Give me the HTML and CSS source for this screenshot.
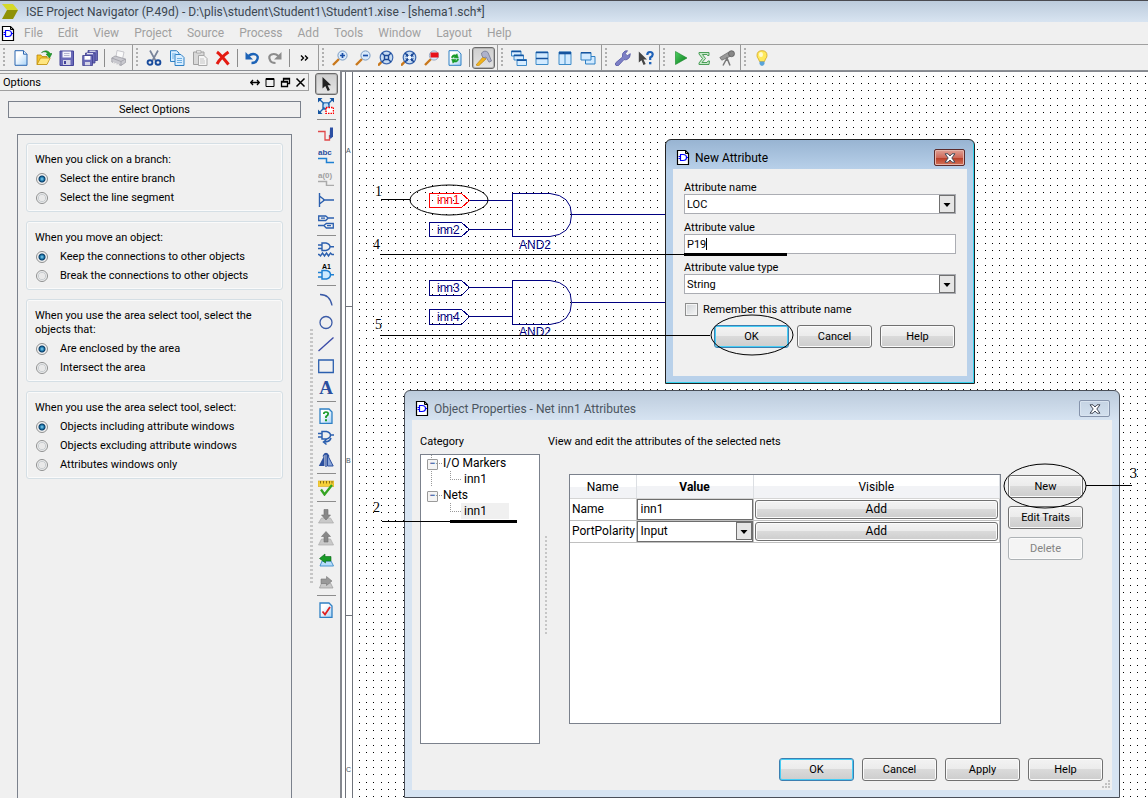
FILE: index.html
```html
<!DOCTYPE html>
<html lang="en">
<head>
<meta charset="utf-8">
<title>ISE Project Navigator</title>
<link rel="stylesheet" href="styles.css">
</head>
<body>
<svg class="defs" aria-hidden="true">
  <defs>
    <symbol id="doc-gate" viewBox="0 0 14 17">
      <path d="M1.500 1.500h8l3 3v11h-11z" fill="#fff" stroke="#000" stroke-width="1.200"/>
      <path d="M9.500 1.500v3h3" fill="none" stroke="#000"/>
      <path d="M4.500 5.500h2.500q3.500 0 3.500 3t-3.500 3h-2.500zM2.500 7.500h2M2.500 9.500h2M10.500 8.500h1.500" fill="none" stroke="#00f" stroke-width="1.200"/>
    </symbol>
    <symbol id="cross" viewBox="0 0 12 10">
      <path d="M1 .8h3l2 2.200 2-2.200h3L7.800 5 11 9.200H8L6 7 4 9.200H1L4.200 5z" fill="#fff" stroke="#444a58" stroke-width="1"/>
    </symbol>
    <linearGradient id="paper" x1="0" y1="0" x2="1" y2="1"><stop offset=".3" stop-color="#fff"/><stop offset="1" stop-color="#a9d3f7"/></linearGradient>
    <linearGradient id="go" x1="0" y1="0" x2="1" y2="1"><stop offset="0" stop-color="#4fd062"/><stop offset="1" stop-color="#087a1c"/></linearGradient>
    <pattern id="dots" x="359" y="156" width="80" height="80" patternUnits="userSpaceOnUse">
      <path d="M0 .5h80M0 7.500h80M0 14.500h80M0 22.500h80M0 29.500h80M0 36.500h80M0 44.500h80M0 51.500h80M0 58.500h80M0 66.500h80M0 73.500h80" stroke="#000" stroke-dasharray="1 6 1 6 1 7 1 6 1 6 1 7 1 6 1 6 1 7 1 6 1 6" shape-rendering="crispEdges"/>
    </pattern>
  </defs>
</svg>

<div class="app">
  <header class="titlebar">
    <svg class="app-logo" viewBox="0 0 18 17"><path d="M1 1h11l5 6H6z" fill="#d5d92a"/><path d="M6 7h11l-5 9H1z" fill="#8f9208"/></svg>
    <h1>ISE Project Navigator (P.49d) - D:\plis\student\Student1\Student1.xise - [shema1.sch*]</h1>
  </header>

  <nav class="menubar">
    <svg class="doc-icon"><use href="#doc-gate"/></svg>
    <button>File</button><button>Edit</button><button>View</button><button>Project</button><button>Source</button><button>Process</button><button>Add</button><button>Tools</button><button>Window</button><button>Layout</button><button>Help</button>
  </nav>

  <div class="toolbar">
    <div class="tools">
      <button aria-label="New"><svg viewBox="0 0 16 16"><path d="M2 .7h8.500L14 4.200v11.100H2z" fill="url(#paper)" stroke="#2b66b0"/><path d="M10.500.7v3.500H14" fill="#e7f3ff" stroke="#2b66b0"/></svg></button>
      <button aria-label="Open"><svg viewBox="0 0 16 16"><path d="M1 14.500V5h4l1 1.500h5V14z" fill="#f3c52e" stroke="#b9850c" stroke-width=".8"/><path d="M1 14.500L4.500 8h9.700L11 14.500z" fill="#ffe680" stroke="#c2920f" stroke-width=".8"/><path d="M5.500 2.500Q10 .5 12 4h-2l3.500 4L16 3.500h-1.700Q11-1.500 5.500 2.500z" fill="#23a32c" stroke="#0e6e18" stroke-width=".5"/></svg></button>
      <button aria-label="Save"><svg viewBox="0 0 16 16"><path d="M1 1h13.500v14.500H1z" fill="#6a6ab8" stroke="#44449a"/><path d="M3.500 1.500h8.500v6H3.500z" fill="#f3f3fb"/><path d="M5 3.500h5.500M5 5.500h5.500" stroke="#a3a3c6" stroke-width=".8"/><path d="M4 10h7.500v5H4z" fill="#d4d4e6"/><path d="M5 11h2v3H5z" fill="#44449a"/></svg></button>
      <button aria-label="Save all"><svg viewBox="0 0 16 16"><g fill="#6a6ab8" stroke="#3f3f8e" stroke-width=".8"><path d="M6 .5h9.500v10H6z"/><path d="M3.500 3H13v10H3.500z"/><path d="M.7 5.500h9.800v10H.7z"/></g><path d="M2.500 6h6v3.700h-6z" fill="#fff"/><path d="M3 12h5v3.200H3z" fill="#d4d4e6"/><path d="M5 3.700h6M7.500 1.200h6" stroke="#fff"/></svg></button>
      <i class="sep"></i>
      <button aria-label="Print"><svg viewBox="0 0 16 16"><path d="M5 7L6 .5l7 1.500L11.500 9z" fill="#fafafa" stroke="#b5b5bb" stroke-width=".7"/><path d="M.8 8L4 6l10.500 3v3.500L10 15.500.8 12z" fill="#c9c9cf" stroke="#97979f" stroke-width=".7"/><path d="M.8 8l9.200 3.500 4.500-2.500M10 11.500v4" fill="none" stroke="#97979f" stroke-width=".7"/><path d="M2 12.500l6 2.300" stroke="#eee"/></svg></button>
    </div>
    <div class="tools">
      <button aria-label="Cut"><svg viewBox="0 0 16 16"><path d="M4 .5l5.500 10M12 .5l-5.500 10" stroke="#78839a" stroke-width="1.700"/><g fill="none" stroke="#174a9c" stroke-width="1.900"><ellipse cx="4" cy="12.500" rx="2.400" ry="2.300"/><ellipse cx="12" cy="12.500" rx="2.400" ry="2.300"/></g></svg></button>
      <button aria-label="Copy"><svg viewBox="0 0 16 16"><g fill="#d8edff" stroke="#2f80c4"><path d="M1.500.7h6L10 3v8.500H1.500z"/><path d="M6 4.500h6l3 3v8H6z"/></g><path d="M3 4h4M3 6h3M3 8h2M8 8.500h5M8 10.500h5M8 12.500h5" stroke="#62a8df" stroke-width=".9"/></svg></button>
      <button aria-label="Paste"><svg viewBox="0 0 16 16"><path d="M1.500 2H12v12.500H1.500z" fill="#d8d8d8" stroke="#a0a0a0"/><path d="M4.500.7H9V3H4.500z" fill="#eee" stroke="#a0a0a0" stroke-width=".8"/><path d="M6.500 5.500h5.500l3 3v7H6.500z" fill="#f5f5f5" stroke="#a8a8a8"/><path d="M8 9h4M8 11h5M8 13h5" stroke="#b9b9b9" stroke-width=".8"/></svg></button>
      <button aria-label="Delete"><svg viewBox="0 0 16 16"><path d="M2 2Q6 5 13.500 14.500M13.500 2Q6 7 2 14" fill="none" stroke="#e41b12" stroke-width="3"/></svg></button>
      <i class="sep"></i>
      <button aria-label="Undo"><svg viewBox="0 0 16 16"><path d="M4.500 6Q8 3 11.500 4.500T13 10Q12 13 7.500 13" fill="none" stroke="#1d63b7" stroke-width="2.400"/><path d="M1.500 2v7.500h7.500z" fill="#1d63b7"/></svg></button>
      <button aria-label="Redo"><svg viewBox="0 0 16 16"><path d="M11.500 6Q8 3 4.500 4.500T3 10Q4 13 8.500 13" fill="none" stroke="#8c8c8c" stroke-width="2.200"/><path d="M14.500 2v7.500H7z" fill="#8c8c8c"/></svg></button>
      <i class="sep"></i>
      <button class="more" aria-label="More"><svg viewBox="0 0 16 16"><path d="M5 5.500l2.500 2.500L5 10.500M9 5.500l2.500 2.500L9 10.500" fill="none" stroke="#000" stroke-width="1.400"/></svg></button>
    </div>
    <div class="tools">
      <button aria-label="Zoom in"><svg viewBox="0 0 16 16"><path d="M1 15l6-6" stroke="#c9781c" stroke-width="2.400"/><circle cx="10.500" cy="5.500" r="4.600" fill="#d9e9fa" stroke="#7a9cc4"/><path d="M10.500 3v5M8 5.500h5" stroke="#1c50a8" stroke-width="1.700"/></svg></button>
      <button aria-label="Zoom out"><svg viewBox="0 0 16 16"><path d="M1 15l6-6" stroke="#c9781c" stroke-width="2.400"/><circle cx="10.500" cy="5.500" r="4.600" fill="#d9e9fa" stroke="#7a9cc4"/><path d="M8 5.500h5" stroke="#1c50a8" stroke-width="1.700"/></svg></button>
      <button aria-label="Zoom full"><svg viewBox="0 0 16 16"><path d="M0 15.500l4-4" stroke="#c9781c" stroke-width="2.400"/><circle cx="8.500" cy="7.500" r="6.300" fill="#c8dcf2" stroke="#3c68b0" stroke-width="1.200"/><path d="M4 3l3 3M13 3l-3 3M4 12l3-3M13 12l-3-3M6.500 5.500h4v4h-4z" fill="none" stroke="#1a4796" stroke-width="1.400"/></svg></button>
      <button aria-label="Zoom fit"><svg viewBox="0 0 16 16"><path d="M0 15.500l4-4" stroke="#c9781c" stroke-width="2.400"/><circle cx="8.500" cy="7.500" r="6.300" fill="#c8dcf2" stroke="#3c68b0" stroke-width="1.200"/><path d="M4 3l9 9M13 3l-9 9" stroke="#1a4796" stroke-width="1.600"/><path d="M4 6.500h3v-3zM13 6.500h-3v-3zM4 8.500h3v3zM13 8.500h-3v3z" fill="#1a4796"/><path d="M7 6h3v3H7z" fill="#f5faff"/></svg></button>
      <button aria-label="Zoom to box"><svg viewBox="0 0 16 16"><path d="M1 15l6-6" stroke="#c9781c" stroke-width="2.400"/><circle cx="10" cy="5.500" r="4.600" fill="#d9e9fa" stroke="#9aa9c4"/><path d="M6.500 2.500h8v5h-8z" fill="#e8101a"/></svg></button>
      <button aria-label="Refresh"><svg viewBox="0 0 16 16"><path d="M2 .7h9L14 4v11.300H2z" fill="url(#paper)" stroke="#2f80c4"/><path d="M4.500 7.500Q5 4 9 5l1-1.200 1.300 4.200-4.300-.2L8 6.500Q6 6.300 5.500 8zM11.500 9Q11 12.700 7 12l-1 1.200L4.700 9.200l4.300.2-1 1.300q2 .3 2.500-1.700z" fill="#189a27" stroke="#189a27" stroke-width=".6"/></svg></button>
      <i class="sep"></i>
      <button class="pressed" aria-label="Design tools"><svg viewBox="0 0 16 16"><path d="M0 15l7.500-8.500L10 9l-7.500 7z" fill="#f1b41d" stroke="#b47b0b" stroke-width=".6"/><path d="M5.500 3Q9-.5 12 2.500l3.500 8.500-2.500 1.200L10 7 8 8 6 6z" fill="#aeb2cb" stroke="#747991" stroke-width=".8"/></svg></button>
    </div>
    <div class="tools">
      <button aria-label="Cascade"><svg viewBox="0 0 16 16"><g fill="#d8edff" stroke="#2f80c4" stroke-width=".9"><path d="M.5 1h9.500v5H.5z"/><path d="M3 5h9.500v5H3z"/><path d="M6 9.500h9.500v6H6z"/></g><path d="M.5 1.500H10M3 5.500h9.500M6 10.200h9.500" stroke="#15539f" stroke-width="1.500"/></svg></button>
      <button aria-label="Tile horizontally"><svg viewBox="0 0 16 16"><path d="M2 2h12v12.500H2z" fill="#d2eaff" stroke="#3c8ac8"/><path d="M2 2.500h12M2 8.500h12" stroke="#15539f" stroke-width="1.600"/></svg></button>
      <button aria-label="Tile vertically"><svg viewBox="0 0 16 16"><path d="M2 2h12v12.500H2zM8 3v11" fill="#d2eaff" stroke="#3c8ac8"/><path d="M2 3h12" stroke="#15539f" stroke-width="2.600"/></svg></button>
      <button aria-label="Layer"><svg viewBox="0 0 16 16"><path d="M5.500 6.500H15v7.500H5.500z" fill="#d2eaff" stroke="#2f80c4"/><path d="M1 2.500h10V10H1z" fill="#d2eaff" stroke="#2f80c4"/><path d="M1 2.800h10" stroke="#15539f" stroke-width="1.500"/></svg></button>
    </div>
    <div class="tools">
      <button aria-label="Settings"><svg viewBox="0 0 16 16"><path d="M1 15.500q-1.500-1.500 0-3L7.500 7Q6.500 3 10 1l2.500-.3-2.200 3 2 2 3-2Q15.500 8 12 9.500q-1.500.6-3 .1L3.500 15.500q-1.500 1-2.500 0z" fill="#7d80c6" stroke="#5457a4" stroke-width=".8"/></svg></button>
      <button aria-label="What is this"><svg viewBox="0 0 16 16"><path d="M.8 1.500v11l2.700-2.300L5.500 15l2.200-.9L5.500 9.500H9z" fill="#444"/><path d="M9.300 5Q9.300 2 12 2t2.700 2.500q0 1.800-2.500 3v2.500" fill="none" stroke="#1f62b9" stroke-width="2.200"/><path d="M11 12h2.400v2.300H11z" fill="#1f62b9"/></svg></button>
    </div>
    <div class="tools">
      <button aria-label="Run"><svg viewBox="0 0 16 16"><path d="M2.500 1.500L14 8 2.500 14.500z" fill="url(#go)" stroke="#128425" stroke-width=".6"/></svg></button>
      <button aria-label="Summary"><svg viewBox="0 0 16 16"><path d="M3 2.500h10v3h-1.500L11 4.500H6.500L9.500 8.500 6 12.500h5l1-1.500h1.500l-.5 3.500H3V13l3.500-4.500L3 4z" fill="#c5e8c8" stroke="#3b9549" stroke-width=".9"/></svg></button>
      <button aria-label="View"><svg viewBox="0 0 16 16"><path d="M.8 7.500L9.500 2.200l2 4-8.700 4z" fill="#999" stroke="#666" stroke-width=".7"/><circle cx="12.500" cy="3.700" r="3" fill="#888" stroke="#555" stroke-width=".7"/><path d="M8 8l-4 7.500M8 8l3 7.500M8 7v4" stroke="#777" stroke-width="1.500"/></svg></button>
    </div>
    <div class="tools last">
      <button aria-label="Tip"><svg viewBox="0 0 16 16"><path d="M8 .7q5 0 5 4.800 0 2-1.500 3.500l-1 2.500h-5L4.500 9Q3 7.500 3 5.500 3 .7 8 .7z" fill="#ffe95c" stroke="#d3a51a" stroke-width=".8"/><ellipse cx="7" cy="4.500" rx="2" ry="2.500" fill="#fffbd0"/><path d="M5.500 11.500h5v2.500L9 15.700H7L5.500 14z" fill="#5aa4d9"/></svg></button>
    </div>
  </div>

  <main class="workspace">
    <aside class="options">
      <div class="panel-title">
        <h2>Options</h2>
        <svg class="panel-icons" viewBox="0 0 56 11"><g fill="none" stroke="#000"><path d="M.5 5.500h9M3 3L.7 5.500 3 8M7 3l2.300 2.500L7 8" stroke-width="1.300"/><path d="M16 1.500h8v8h-8zM16 2.500h8"/><path d="M33.500 4.500V1.500h6v5h-2M31.500 4.500h6v5h-6zM33 2h7M31 5h7" stroke-width="1.300"/><path d="M46.500 1.500l8 8M54.500 1.500l-8 8" stroke-width="1.500"/></g></svg>
      </div>
      <button class="select-options">Select Options</button>
      <form class="option-frame">
        <fieldset>
          <p>When you click on a branch:</p>
          <label><input type="radio" name="click" checked>Select the entire branch</label>
          <label><input type="radio" name="click">Select the line segment</label>
        </fieldset>
        <fieldset>
          <p>When you move an object:</p>
          <label><input type="radio" name="move" checked>Keep the connections to other objects</label>
          <label><input type="radio" name="move">Break the connections to other objects</label>
        </fieldset>
        <fieldset>
          <p>When you use the area select tool, select the objects that:</p>
          <label><input type="radio" name="area" checked>Are enclosed by the area</label>
          <label><input type="radio" name="area">Intersect the area</label>
        </fieldset>
        <fieldset>
          <p>When you use the area select tool, select:</p>
          <label><input type="radio" name="objects" checked>Objects including attribute windows</label>
          <label><input type="radio" name="objects">Objects excluding attribute windows</label>
          <label><input type="radio" name="objects">Attributes windows only</label>
        </fieldset>
      </form>
    </aside>

    <div class="splitter"></div>

    <div class="palette">
      <button class="pressed" aria-label="Select"><svg viewBox="0 0 16 16"><path d="M4.500 1v11.500l2.800-2.500 2.400 5 2.200-1-2.300-4.800h3.600z" fill="#222"/></svg></button>
      <button aria-label="Zoom to selection"><svg viewBox="0 0 16 16"><path d="M1 1l14 13M15 1L1 15M5 5h6v6H5z" fill="none" stroke="#1c66b2" stroke-width="1.400"/><path d="M0 0h4.500L0 4.500zM16 0v4.500L11.500 0zM0 16v-4.500L4.500 16z" fill="#1454a0"/><path d="M6 5.500h4v4H6z" fill="#bfe0fa"/><path d="M8 9.500h7.500v6H8z" fill="#fff" stroke="#f00" stroke-width="1.500" stroke-dasharray="1.500 1"/></svg></button>
      <i class="rule"></i>
      <button aria-label="Add wire"><svg viewBox="0 0 16 16"><path d="M0 5.500h7v8.500h4.500V9" fill="none" stroke="#e0484a" stroke-width="1.300"/><path d="M12 1.500h3v9l-2.500 2.500-.8-2.500z" fill="#2c4fa3"/></svg></button>
      <button aria-label="Add net name"><svg viewBox="0 0 16 16"><text x="0" y="7" class="glyph blue">abc</text><path d="M0 10.500h8.500v4H16" fill="none" stroke="#1e80d2" stroke-width="1.500"/></svg></button>
      <button aria-label="Rename bus"><svg viewBox="0 0 16 16"><text x="0" y="8" class="glyph gray">a(0)</text><path d="M0 11.500h8.500v4H16" fill="none" stroke="#aaa" stroke-width="1.500"/></svg></button>
      <button aria-label="Bus tap"><svg viewBox="0 0 16 16"><path d="M1.500 1v14M1.500 4l5 4-5 4M5 8h11" fill="none" stroke="#2b5fae" stroke-width="1.400"/></svg></button>
      <button aria-label="I/O marker"><svg viewBox="0 0 16 16"><path d="M.7 2h7l2.500 2-2.500 2.500h-7zM10 4h6M15.300 9.500h-7l-2.500 2 2.500 2.500h7zM6 11.500H0M3 4.200h4M9 11.700h4" fill="none" stroke="#2b5fae" stroke-width="1.300"/></svg></button>
      <i class="rule"></i>
      <button aria-label="Add symbol"><svg viewBox="0 0 16 16"><path d="M0 3h4M0 6.500h4M4 1h4q4 1 4 3.700T8 8.500H4zM12 4.700h4M0 12.500h1l1.500 1.500 2-3 2 3 2-3 2 3 2-3 1.500 1.500h2" fill="none" stroke="#2b5fae" stroke-width="1.400"/></svg></button>
      <button aria-label="Instance name"><svg viewBox="0 0 16 16"><text x="4" y="5" class="glyph black">A1</text><path d="M0 8.500h4M0 13h4M4 6.500h4.500q4 1 4 4.200t-4 4.300H4zM12.500 10.700H16" fill="#cdeaff" stroke="#1e80d2" stroke-width="1.500"/></svg></button>
      <i class="rule"></i>
      <button aria-label="Arc"><svg viewBox="0 0 16 16"><path d="M2 2.500q10 0 12 11" fill="none" stroke="#3b5ba7" stroke-width="1.300"/></svg></button>
      <button aria-label="Circle"><svg viewBox="0 0 16 16"><circle cx="8" cy="8.500" r="6" fill="none" stroke="#3b5ba7" stroke-width="1.300"/></svg></button>
      <button aria-label="Line"><svg viewBox="0 0 16 16"><path d="M.5 15L15.500 1.500" stroke="#3b4ba7" stroke-width="1.400"/></svg></button>
      <button aria-label="Rectangle"><svg viewBox="0 0 16 16"><path d="M.7 2h14.600v12.500H.7z" fill="none" stroke="#2b5fae" stroke-width="1.300"/></svg></button>
      <button class="letter" aria-label="Text">A</button>
      <i class="rule"></i>
      <button aria-label="Query"><svg viewBox="0 0 16 16"><path d="M2 1h9l3 3v11.300H2z" fill="url(#paper)" stroke="#2f80c4" stroke-width="1.300"/><path d="M5.800 6q0-2 2.200-2t2.200 1.800Q10.200 7.500 8 8.500V10" fill="none" stroke="#189a27" stroke-width="1.700"/><path d="M7 11.300h2v2H7z" fill="#189a27"/></svg></button>
      <button aria-label="Rotate"><svg viewBox="0 0 16 16"><path d="M0 3.500h4M0 7h4M4 1.500h4.500q4 1 4 3.700t-4 3.700H4zM12.500 5H16M13 8q-1 4-7 4M8.500 9.500L5.500 12l3 2.500" fill="none" stroke="#2b5fae" stroke-width="1.500"/></svg></button>
      <button aria-label="Mirror"><svg viewBox="0 0 16 16"><path d="M6.500 3v11H.8z" fill="#2b4f9e"/><path d="M9.500 3v11h5.700z" fill="#8ba6d8" stroke="#2b4f9e"/><path d="M5 4.500Q8-1.500 11 4.500M8 2v13" fill="none" stroke="#2b4f9e" stroke-width="1.300"/></svg></button>
      <i class="rule"></i>
      <button aria-label="Check schematic"><svg viewBox="0 0 16 16"><path d="M0 1h16v5.500H0z" fill="#f5cf3a" stroke="#d7a81c" stroke-width=".6"/><path d="M2.500 1v2.500M5.500 1v2.500M8.500 1v2.500M11.500 1v2.500M14 1v2.500" stroke="#8b7012"/><path d="M3 9.500l3.500 5L14 5" fill="none" stroke="#35a422" stroke-width="2.300"/></svg></button>
      <i class="rule"></i>
      <button aria-label="Push into symbol"><svg viewBox="0 0 16 16"><path d="M3.500 10h9l3 5H.5z" fill="#c9c9c9" stroke="#aaa" stroke-width=".7"/><path d="M6 1.500h4V7h2.500L8 12 3.500 7H6z" fill="#888" stroke="#707070" stroke-width=".6"/></svg></button>
      <button aria-label="Pop to parent"><svg viewBox="0 0 16 16"><path d="M3.500 9h9l3 6H.5z" fill="#c9c9c9" stroke="#aaa" stroke-width=".7"/><path d="M6 12V6.500H3.500L8 1.500l4.500 5H10V12z" fill="#888" stroke="#707070" stroke-width=".6"/></svg></button>
      <button aria-label="Previous view"><svg viewBox="0 0 16 16"><path d="M4 9h9l2.500 5H2z" fill="#b7dcfa" stroke="#3c8ac8" stroke-width=".9"/><path d="M13 4.500v4.500H7.500V11L1.500 6.500 7 2v2.500z" fill="#189a27" stroke="#086515" stroke-width=".6"/></svg></button>
      <button aria-label="Next view"><svg viewBox="0 0 16 16"><path d="M3.500 9h9l2.500 5H1.500z" fill="#c9c9c9" stroke="#999" stroke-width=".7"/><path d="M3 5v4.500h5.500v2L14 7 8.500 2.500V5z" fill="#999" stroke="#777" stroke-width=".6"/></svg></button>
      <i class="rule"></i>
      <button aria-label="Report"><svg viewBox="0 0 16 16"><path d="M2 1h9l3 3v11.300H2z" fill="url(#paper)" stroke="#2f80c4" stroke-width="1.300"/><path d="M4.500 9.500l2.500 3L12 5" fill="none" stroke="#e02020" stroke-width="1.800"/></svg></button>
    </div>

    <section class="canvas">
      <svg class="layer" shape-rendering="crispEdges">
        <g transform="translate(-342 -72)">
          <rect x="359" y="72" width="4000" height="4000" fill="url(#dots)"/>
          <path d="M345.500 72v4000M352.500 72v4000M345 306.500h8M345 615.500h8" stroke="#70747c"/>
          <g class="ruler"><text x="346" y="153">A</text><text x="346" y="463">B</text><text x="346" y="772">C</text></g>
          <g fill="none" stroke="#000080">
            <path d="M470 200.500h42M470 229.500h42M470 287.500h42M470 316.500h42M572 214.500h94M572 302.500h94"/>
            <path d="M550 193.500H512.500v43H550M550 280.500H512.500v44H550"/>
            <path d="M550 193.500q21.500 2 21.500 21.500T550 236.500M550 280.500q21.500 2 21.500 22T550 324.500" shape-rendering="auto"/>
            <path d="M429.500 222.500h32l8 7-8 7h-32zM429.500 280.500h32l8 7-8 8h-32zM429.500 309.500h32l8 7-8 8h-32z"/>
            <path d="M429.500 193.500h32l8 7-8 7h-32z" stroke="#f00"/>
          </g>
          <g class="net"><text x="437" y="204" class="red">inn1</text><text x="437" y="234">inn2</text><text x="437" y="292">inn3</text><text x="437" y="321">inn4</text><text x="519" y="249">AND2</text></g>
          <svg x="515" y="320" width="40" height="16"><text x="4" y="16" class="net">AND2</text></svg>
        </g>
      </svg>

      <section class="window properties">
        <div class="window-title"><svg class="doc-icon"><use href="#doc-gate"/></svg><h2>Object Properties - Net inn1 Attributes</h2><button class="close" aria-label="Close"><svg><use href="#cross"/></svg></button></div>
        <div class="client">
          <div class="prop-body">
            <div class="category">
              <p>Category</p>
              <div class="tree">
                <ul>
                  <li><span class="node">I/O Markers</span><ul><li><span>inn1</span></li></ul></li>
                  <li><span class="node">Nets</span><ul><li><span class="selected">inn1</span></li></ul></li>
                </ul>
              </div>
            </div>
            <div class="grip"></div>
            <div class="attributes">
              <p>View and edit the attributes of the selected nets</p>
              <div class="attr-row">
                <div class="sheet">
                  <table>
                    <thead><tr><th>Name</th><th class="strong">Value</th><th>Visible</th></tr></thead>
                    <tbody>
                      <tr><td>Name</td><td class="cell"><input type="text" value="inn1" aria-label="Name value"></td><td class="cell"><button class="btn add">Add</button></td></tr>
                      <tr><td>PortPolarity</td><td class="cell"><select aria-label="Port polarity"><option>Input</option></select></td><td class="cell"><button class="btn add">Add</button></td></tr>
                    </tbody>
                  </table>
                </div>
                <div class="side-buttons"><button class="btn">New</button><button class="btn">Edit Traits</button><button class="btn" disabled>Delete</button></div>
              </div>
            </div>
          </div>
          <div class="buttons"><button class="btn default">OK</button><button class="btn">Cancel</button><button class="btn">Apply</button><button class="btn">Help</button></div>
          <svg class="size-grip" viewBox="0 0 8 8"><path d="M6 0h2v2H6zM3 3h2v2H3zM6 3h2v2H6zM0 6h2v2H0zM3 6h2v2H3zM6 6h2v2H6z" fill="#c2c2c2"/></svg>
        </div>
      </section>

      <section class="window attribute">
        <div class="window-title"><svg class="doc-icon"><use href="#doc-gate"/></svg><h2>New Attribute</h2><button class="close" aria-label="Close"><svg><use href="#cross"/></svg></button></div>
        <form class="client">
          <label for="attr-name">Attribute name</label>
          <select id="attr-name"><option>LOC</option></select>
          <label for="attr-value">Attribute value</label>
          <input type="text" id="attr-value" value="P19">
          <label for="attr-type">Attribute value type</label>
          <select id="attr-type"><option>String</option></select>
          <label class="remember"><input type="checkbox"><span>Remember this attribute name</span></label>
          <div class="buttons"><button type="button" class="btn default">OK</button><button type="button" class="btn">Cancel</button><button type="button" class="btn">Help</button></div>
        </form>
      </section>

      <svg class="layer notes">
        <g transform="translate(-342 -72)">
          <path d="M706.500 238v12" stroke="#000" shape-rendering="crispEdges"/>
          <path d="M381 199.500h29M380 254.500h407M380 335.500h330M382 521.500h135M1086 485.500h46" stroke="#000" shape-rendering="crispEdges"/>
          <path d="M684 254.500h103M450 521.500h67" stroke="#000" stroke-width="3" shape-rendering="crispEdges"/>
          <g fill="none" stroke="#000"><ellipse cx="449" cy="200" rx="39" ry="15"/><ellipse cx="752" cy="335" rx="41" ry="20"/><ellipse cx="1045" cy="486" rx="41" ry="22"/></g>
          <g class="numbers"><text x="375" y="196">1</text><text x="373" y="512">2</text><text x="1130" y="478">3</text><text x="373" y="249">4</text><text x="375" y="329">5</text></g>
        </g>
      </svg>
    </section>
  </main>
</div>
</body>
</html>
```
FILE: styles.css
```css
* { box-sizing: border-box; margin: 0; }
html, body { height: 100%; }
body { background: #f0f0f0; color: #000; font: 11px/14px Roboto, "Open Sans", sans-serif; overflow: hidden; }
button, input, select { font: inherit; color: inherit; padding: 0; border: 0; background: none; border-radius: 0; }
h1, h2 { font-size: 12px; font-weight: 400; white-space: nowrap; }
svg { display: block; flex: none; }
.defs { position: absolute; width: 0; height: 0; }

.app { display: flex; flex-direction: column; height: 100vh; }

.titlebar { display: flex; align-items: center; gap: 7px; height: 22px; flex: none; padding-left: 1px; border-top: 1px solid #4a4a50; background: linear-gradient(#bccbdc, #d8e4f1); }
.titlebar h1 { color: #3c4650; }
.app-logo { width: 18px; height: 17px; }

.menubar { display: flex; align-items: center; gap: 15px; height: 22px; flex: none; padding-left: 1px; color: #a0a0a0; font-size: 12px; }
.menubar .doc-icon { margin-right: -6px; }
.doc-icon { width: 14px; height: 17px; }

.toolbar { display: flex; height: 27px; flex: none; border-top: 1px solid #a0a0a0; border-bottom: 1px solid #8c8f94; }
.tools { display: flex; align-items: center; padding: 0 2px 0 9px; border-right: 1px solid #9a9a9a; }
.tools::before { content: ""; width: 2px; height: 20px; margin: 0 4px 0 -6px; background: repeating-linear-gradient(#b0b0b0 0 2px, transparent 2px 4px); }
.tools.last { border-right: 0; }
.tools button { display: grid; place-items: center; width: 23px; height: 22px; }
.tools .more { width: 24px; }
.tools svg { width: 16px; height: 16px; }
.sep { width: 1px; height: 18px; margin: 0 2px 0 3px; background: #8c8c8c; }
.tools .pressed, .palette .pressed { border: 1px solid #6a6a6a; border-radius: 3px; background: linear-gradient(#cfcfcf, #e4e4e4); box-shadow: inset 0 0 0 1px #b4b4b4; }

.workspace { display: flex; flex: 1; min-height: 0; }
.options { display: flex; flex-direction: column; width: 309px; flex: none; padding-top: 2px; }
.panel-title { display: flex; align-items: center; justify-content: space-between; height: 18px; flex: none; padding: 1px 2px 0 3px; border: 1px solid #a0a0a0; border-left: 0; }
.panel-title h2 { font-size: 11px; }
.panel-icons { width: 56px; height: 11px; }
.select-options { height: 17px; flex: none; margin: 10px 8px 16px; border: 1px solid #7b818c; line-height: 14px; }
.option-frame { flex: 1; margin: 0 17px; padding: 8px; border: 1px solid #7b818c; border-bottom: 0; }
fieldset { min-width: 0; margin-bottom: 9px; padding: 9px 8px 4px; border: 1px solid #d5dfe5; border-radius: 3px; box-shadow: inset 0 0 0 1px #fafafa; }
fieldset p { padding-bottom: 2px; }
fieldset label { display: flex; align-items: center; gap: 12px; height: 19px; }
input[type="radio"] { appearance: none; width: 12px; height: 12px; margin: 0 0 0 1px; flex: none; border: 1px solid #8e8f8f; border-radius: 50%; background: radial-gradient(#e9e9e9 40%, #c9cdd0 50%, #fafafa 70%); }
input[type="radio"]:checked { background: radial-gradient(circle at 5px 5px, #8fd6f5 0, #1b75a8 2px, #0b3c66 3px, #f2f2f2 4px); }

.splitter { width: 5px; flex: none; background: repeating-linear-gradient(#c6c6c6 0 2px, transparent 2px 4px) 1px 258px / 3px 254px no-repeat; }

.palette { display: flex; flex-direction: column; align-items: center; width: 24px; flex: none; padding-top: 2px; }
.palette button { display: grid; place-items: center; width: 23px; height: 22px; flex: none; }
.palette svg { width: 16px; height: 16px; }
.rule { width: 19px; height: 1px; margin: 2px 0 3px; flex: none; background: #8c8c8c; }
.glyph { font: bold 8px "Liberation Sans", sans-serif; }
.glyph.blue { fill: #2b4f9e; }
.glyph.gray { fill: #a0a0a0; }
.glyph.black { font-size: 7px; }
.palette .letter { font: bold 19px/22px "Liberation Serif", serif; color: #2b4f9e; }

.canvas { position: relative; flex: 1; min-width: 0; margin-left: 2px; overflow: hidden; border: solid #85888f; border-width: 1px 0 0 2px; background: #fff; }
.layer { position: absolute; inset: 0; width: 100%; height: 100%; }
.notes { pointer-events: none; }
.net { font: 12px "Liberation Sans", sans-serif; fill: #000080; }
.net .red { fill: #f00; }
.numbers { font: 14px "Liberation Serif", serif; }
.ruler { font: 7px "Liberation Sans", sans-serif; fill: #456; }

.window { position: absolute; display: flex; flex-direction: column; padding: 0 7px 7px; border-radius: 6px 6px 0 0; border: 1px solid #222; }
.window-title { display: flex; align-items: center; gap: 5px; height: 29px; flex: none; padding: 6px 2px 0 3px; }
.window-title h2 { flex: 1; }
.close { display: grid; place-items: center; width: 31px; height: 17px; border: 1px solid #8593ab; border-radius: 2px; box-shadow: inset 0 0 0 1px #d9e4f0; }
.close svg { width: 12px; height: 10px; }
.client { flex: 1; background: #f0f0f0; }

.properties { left: 62px; top: 318px; width: 716px; height: 408px; background: linear-gradient(#bccbdc, #d7e4f2 30px); border-color: #4a4f58; }
.properties .window-title { color: #4b5560; }
.properties .client { position: relative; display: flex; flex-direction: column; padding: 15px 9px 9px 8px; }
.prop-body { display: flex; flex: 1; min-height: 0; padding-bottom: 14px; }
.category { display: flex; flex-direction: column; width: 120px; gap: 5px; }
.tree { flex: 1; border: 1px solid #7b818c; background: #fff; padding: 0 0 0 5px; font-size: 12px; line-height: 16px; }
.tree ul { list-style: none; padding: 0; }
.tree > ul > li { position: relative; padding-left: 17px; }
.tree > ul > li::before { content: "−"; position: absolute; left: 1px; top: 4px; width: 9px; height: 9px; border: 1px solid #9a9a9a; border-radius: 1px; background: #f4f4f4; color: #2b4f9e; font: bold 9px/7px "Liberation Sans", sans-serif; text-align: center; }
.tree > ul > li::after { content: ""; position: absolute; left: 10px; top: 8px; width: 6px; border-top: 1px dotted #999; }
.tree > ul > li:first-child { background: linear-gradient(#999 50%, transparent 50%) 5px 12px / 1px 2px repeat-y; }
.tree li li { display: flex; }
.tree li li::before { content: ""; width: 10px; height: 8px; margin-left: 7px; border: dotted #999; border-width: 0 0 1px 1px; }
.tree li li span { padding: 0 22px 0 3px; }
.tree .selected { background: #f0f0f0; }
.grip { width: 8px; margin: 101px 0 108px; background: repeating-linear-gradient(#c6c6c6 0 2px, transparent 2px 4px) 5px 0 / 2px 100% no-repeat; }
.attributes { display: flex; flex-direction: column; flex: 1; gap: 25px; min-width: 0; }
.attr-row { display: flex; gap: 7px; flex: 1; margin: 0 20px 20px 21px; }
.sheet { flex: 1; border: 1px solid #7b818c; background: #fff; }
table { width: 100%; border-collapse: collapse; table-layout: fixed; font-size: 12px; }
th { height: 23px; padding: 2px 0 0; border-right: 1px solid #dcdfe3; border-bottom: 1px solid #d5d5d5; background: linear-gradient(#fff 50%, #f2f3f6 50%); font-weight: 400; }
th:nth-child(1) { width: 66px; }
th:nth-child(2) { width: 117px; }
th.strong { font-weight: 700; }
td { height: 22px; padding: 0 0 0 2px; border-right: 1px solid #c0c0c0; border-bottom: 1px solid #c0c0c0; }
td.cell { padding: 0; }
td input, td select { display: block; width: 100%; height: 21px; padding-left: 3px; border: 1px solid #6e6e6e; background: #fff; }
.btn { width: 75px; height: 23px; padding-top: 1px; border: 1px solid #707070; border-radius: 3px; background: linear-gradient(#f3f3f3, #ebebeb 50%, #dadada 50%, #cdcdcd); box-shadow: inset 0 0 0 1px #fbfbfb; }
.btn.default { border-color: #3c7fb1; box-shadow: inset 0 0 0 1px #45cdf5; }
.btn:disabled { border-color: #adb2b5; background: #f4f4f4; color: #838383; }
.btn.add { display: block; width: calc(100% - 2px); height: 19px; margin: 1px; padding: 0; line-height: 16px; font-size: 12px; }
.side-buttons { display: flex; flex-direction: column; gap: 8px; padding-top: 1px; }
.buttons { display: flex; justify-content: flex-end; gap: 8px; }
.size-grip { position: absolute; right: 2px; bottom: 2px; width: 8px; height: 8px; }

.attribute { left: 323px; top: 67px; width: 310px; height: 245px; background: linear-gradient(#98b4d2, #b9d1ea 30px); box-shadow: inset -1px -1px 0 #34d3ee; }
.attribute .close { border-color: #5c2b2b; background: linear-gradient(#e0a195, #cf6a5a 50%, #b53a24 50%, #d4745a); box-shadow: inset 0 0 0 1px #e6b5aa; }
.attribute .client { display: flex; flex-direction: column; padding: 12px 11px 0; }
.attribute .client > label { height: 13px; }
.attribute .client > select, .attribute .client > input { height: 20px; flex: none; margin-bottom: 7px; padding: 1px 0 0 2px; border: 1px solid #abadb3; background: #fff; }
.attribute .buttons { padding-right: 1px; }
select { appearance: none; }
td select, .attribute .client > select { background: url("data:image/svg+xml,%3Csvg xmlns='http://www.w3.org/2000/svg' width='16' height='18'%3E%3Crect x='.5' y='.5' width='15' height='17' fill='%23e6e6e6' stroke='%23707070'/%3E%3Cpath d='M4.500 8h7l-3.500 4z'/%3E%3C/svg%3E") right center no-repeat, #fff; }
.attribute .client > .remember { display: flex; align-items: center; gap: 5px; height: 16px; margin: 0 0 8px 1px; }
.remember span { padding-top: 1px; }
input[type="checkbox"] { appearance: none; width: 13px; height: 13px; margin: 0; border: 1px solid #8e8f8f; background: linear-gradient(135deg, #cfd3d6, #f6f6f6); box-shadow: inset 0 0 0 1px #f4f4f4; }
```
